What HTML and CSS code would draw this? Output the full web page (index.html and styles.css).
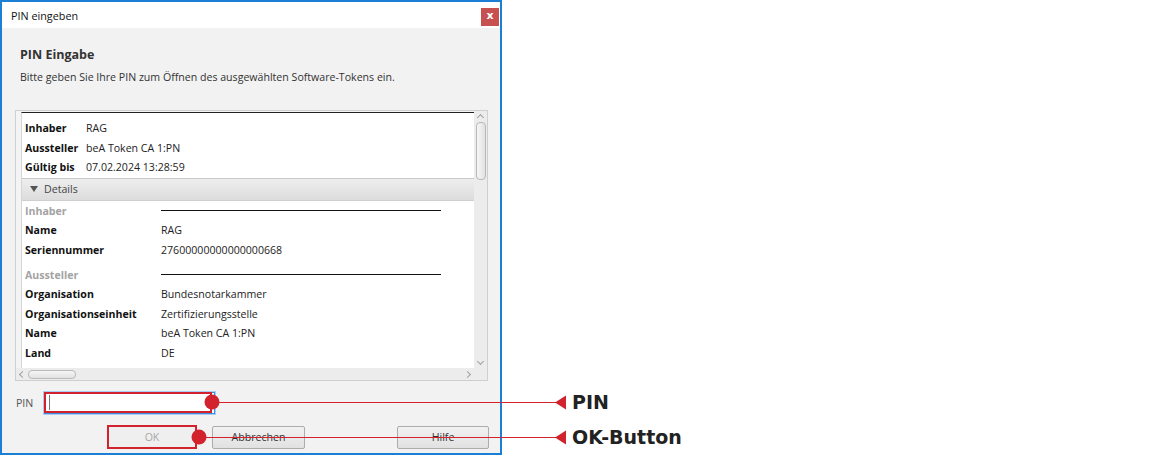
FILE: index.html
```html
<!doctype html>
<html lang="de">
<head>
	<meta charset="UTF-8">
	<title>PIN eingeben</title>
	<link rel="stylesheet" href="styles.css">
</head>
<body>
<div class="window">
	<div class="titlebar">
		<span class="title">PIN eingeben</span>
		<span class="close">x</span>
	</div>
	<div class="content">
		<h1 class="heading">PIN Eingabe</h1>
		<p class="intro">Bitte geben Sie Ihre PIN zum Öffnen des ausgewählten Software-Tokens ein.</p>

		<div class="scrollpane">
			<div class="viewport">
				<div class="sheet">
					<div class="summary">
						<div class="row"><span class="key">Inhaber</span><span>RAG</span></div>
						<div class="row"><span class="key">Aussteller</span><span>beA Token CA 1:PN</span></div>
						<div class="row"><span class="key">Gültig bis</span><span>07.02.2024 13:28:59</span></div>
					</div>
					<div class="details-bar"><span class="arrow"></span>Details</div>
					<div class="details">
						<div class="group"><span class="key">Inhaber</span><span class="rule"></span></div>
						<div class="row"><span class="key">Name</span><span>RAG</span></div>
						<div class="row"><span class="key">Seriennummer</span><span>27600000000000000668</span></div>
						<div class="group"><span class="key">Aussteller</span><span class="rule"></span></div>
						<div class="row"><span class="key">Organisation</span><span>Bundesnotarkammer</span></div>
						<div class="row"><span class="key">Organisationseinheit</span><span>Zertifizierungsstelle</span></div>
						<div class="row"><span class="key">Name</span><span>beA Token CA 1:PN</span></div>
						<div class="row"><span class="key">Land</span><span>DE</span></div>
						<div class="row"><span class="key">&nbsp;</span><span></span></div>
					</div>
				</div>
			</div>
			<div class="vbar">
				<span class="chev up"></span>
				<span class="vthumb"></span>
				<span class="chev down"></span>
			</div>
			<div class="hbar">
				<span class="chev left"></span>
				<span class="hthumb"></span>
				<span class="chev right"></span>
			</div>
			<div class="corner"></div>
		</div>

		<div class="pin-row">
			<span class="pin-label">PIN</span>
			<div class="pin-field"><span class="caret"></span></div>
		</div>

		<div class="buttons">
			<span class="btn disabled">OK</span>
			<span class="btn">Abbrechen</span>
			<span class="btn help">Hilfe</span>
		</div>
	</div>
</div>

<!-- Hinweis-Markierungen -->
<svg class="marks" width="1158" height="457" viewBox="0 0 1158 457">
	<g fill="none" stroke="#d2222d" stroke-width="2">
		<rect x="45" y="393" width="166" height="19"/>
		<rect x="108" y="426" width="88" height="22"/>
	</g>
	<g stroke="#d2222d" stroke-width="1">
		<line x1="212" y1="402.5" x2="558" y2="402.5"/>
		<line x1="199" y1="437.5" x2="558" y2="437.5"/>
	</g>
	<g fill="#d2222d">
		<circle cx="212" cy="402" r="7.5"/>
		<circle cx="199" cy="437" r="7.5"/>
		<polygon points="555,402.5 566,395.5 566,409.5"/>
		<polygon points="555,437.5 566,430.5 566,444.5"/>
	</g>
</svg>
<div class="mark-label pin">PIN</div>
<div class="mark-label ok">OK-Button</div>
</body>
</html>
```

FILE: styles.css
```css
body{margin:0;padding:0;background:#fff;font-family:"Open Sans","Noto Sans",sans-serif;font-size:10.6px;color:#222;}
h1,p{margin:0;}

.window{
	width:498px;
	height:451px;
	border:2px solid #1b7fd6;
	display:flex;
	flex-direction:column;
	background:#f2f2f2;
}

.titlebar{
	height:26px;
	background:#fff;
	display:flex;
	align-items:center;
	justify-content:space-between;
	padding:0 1px 0 9px;
}
.title{font-size:10.8px;color:#111;}
.close{
	width:18px;
	height:18px;
	margin-top:3px;
	background:#c75050;
	color:#fff;
	font-family:"DejaVu Sans",sans-serif;
	font-weight:bold;
	font-size:11px;
	line-height:16px;
	text-align:center;
}

.content{
	flex:1;
	padding:17px 13px 0 13px;
	display:flex;
	flex-direction:column;
}
.heading{font-size:12.5px;font-weight:bold;color:#333;margin-left:5px;height:20px;line-height:20px;}
.intro{margin-left:5px;margin-top:2px;height:20px;line-height:20px;color:#333;}

/* Zertifikatsansicht mit Rollbalken */
.scrollpane{
	margin-top:23px;
	width:471px;
	height:269px;
	border:1px solid #cfcfcf;
	display:grid;
	grid-template-columns:1fr 13px;
	grid-template-rows:1fr 12px;
	background:#f4f4f4;
}
.viewport{
	overflow:hidden;
	padding:1px 0 0 5px;
}
.sheet{
	background:#fff;
	border-top:1px solid #222;
	border-left:1px solid #d6d6d6;
	height:400px;
	padding-top:6px;
}
.row,.group{
	display:flex;
	height:19.6px;
	line-height:19.6px;
	padding-left:3px;
	white-space:nowrap;
}
.key{font-weight:bold;color:#111;}
.summary .key{width:61px;}
.details .key{width:136px;}
.group .key{color:#a3a3a3;}
.group{margin-top:5px;}
.details .group:first-child{margin-top:1px;}
.rule{width:280px;height:1px;background:#111;margin-top:8px;}

.details-bar{
	height:21px;
	line-height:21px;
	margin-top:0;
	border-top:1px solid #c9c9c9;
	border-bottom:1px solid #cfcfcf;
	background:linear-gradient(#eeeeee,#dcdcdc);
	color:#444;
	padding-left:8px;
	display:flex;
	align-items:center;
}
.arrow{
	width:0;
	height:0;
	border-left:4px solid transparent;
	border-right:4px solid transparent;
	border-top:6px solid #555;
	margin-right:6px;
}

.vbar{
	background:#ececec;
	display:flex;
	flex-direction:column;
	align-items:center;
}
.vthumb{
	width:8px;
	height:56px;
	margin-top:2px;
	border:1px solid #b9b9b9;
	border-radius:4px;
	background:linear-gradient(to right,#f6f6f6,#e2e2e2);
}
.hbar{
	background:#ececec;
	display:flex;
	align-items:center;
	padding-left:4px;
}
.hthumb{
	width:46px;
	height:7px;
	margin-left:3px;
	border:1px solid #b9b9b9;
	border-radius:4px;
	background:linear-gradient(#f6f6f6,#e2e2e2);
}
.corner{background:#ececec;}

.chev{
	width:4px;
	height:4px;
	border-left:1px solid #a0a0a0;
	border-top:1px solid #a0a0a0;
}
.up{transform:rotate(45deg);margin-top:4px;}
.down{transform:rotate(225deg);margin-top:auto;margin-bottom:4px;}
.left{transform:rotate(-45deg);}
.right{transform:rotate(135deg);margin-left:auto;margin-right:4px;}

.pin-row{
	display:flex;
	align-items:center;
	margin-top:9px;
	height:25px;
}
.pin-label{color:#555;width:28px;padding-left:1px;}
.pin-field{
	width:165px;
	height:20px;
	background:#fff;
	border:1px solid #3d8ee0;
	box-shadow:0 0 0 1px #a9cdf2;
	display:flex;
	align-items:center;
	padding-left:4px;
}
.caret{width:1px;height:15px;background:#777;}

.buttons{
	display:flex;
	margin-top:11px;
	padding-left:92px;
}
.btn{
	box-sizing:border-box;
	flex-shrink:0;
	width:93px;
	height:23px;
	line-height:21px;
	text-align:center;
	border:1px solid #acacac;
	border-radius:2px;
	background:linear-gradient(#f2f2f2,#e1e1e1);
	color:#333;
}
.btn.disabled{color:#a8a8a8;border-color:#d0d0d0;background:#efefef;width:90px;margin-right:15px;}
.btn.help{margin-left:92px;width:92px;}

.marks{position:absolute;left:0;top:0;pointer-events:none;}
.mark-label{
	position:absolute;
	left:572px;
	font-family:"DejaVu Sans",sans-serif;
	font-weight:bold;
	font-size:19px;
	color:#222;
	line-height:22px;
}
.mark-label.pin{top:391px;}
.mark-label.ok{top:426px;}
```
